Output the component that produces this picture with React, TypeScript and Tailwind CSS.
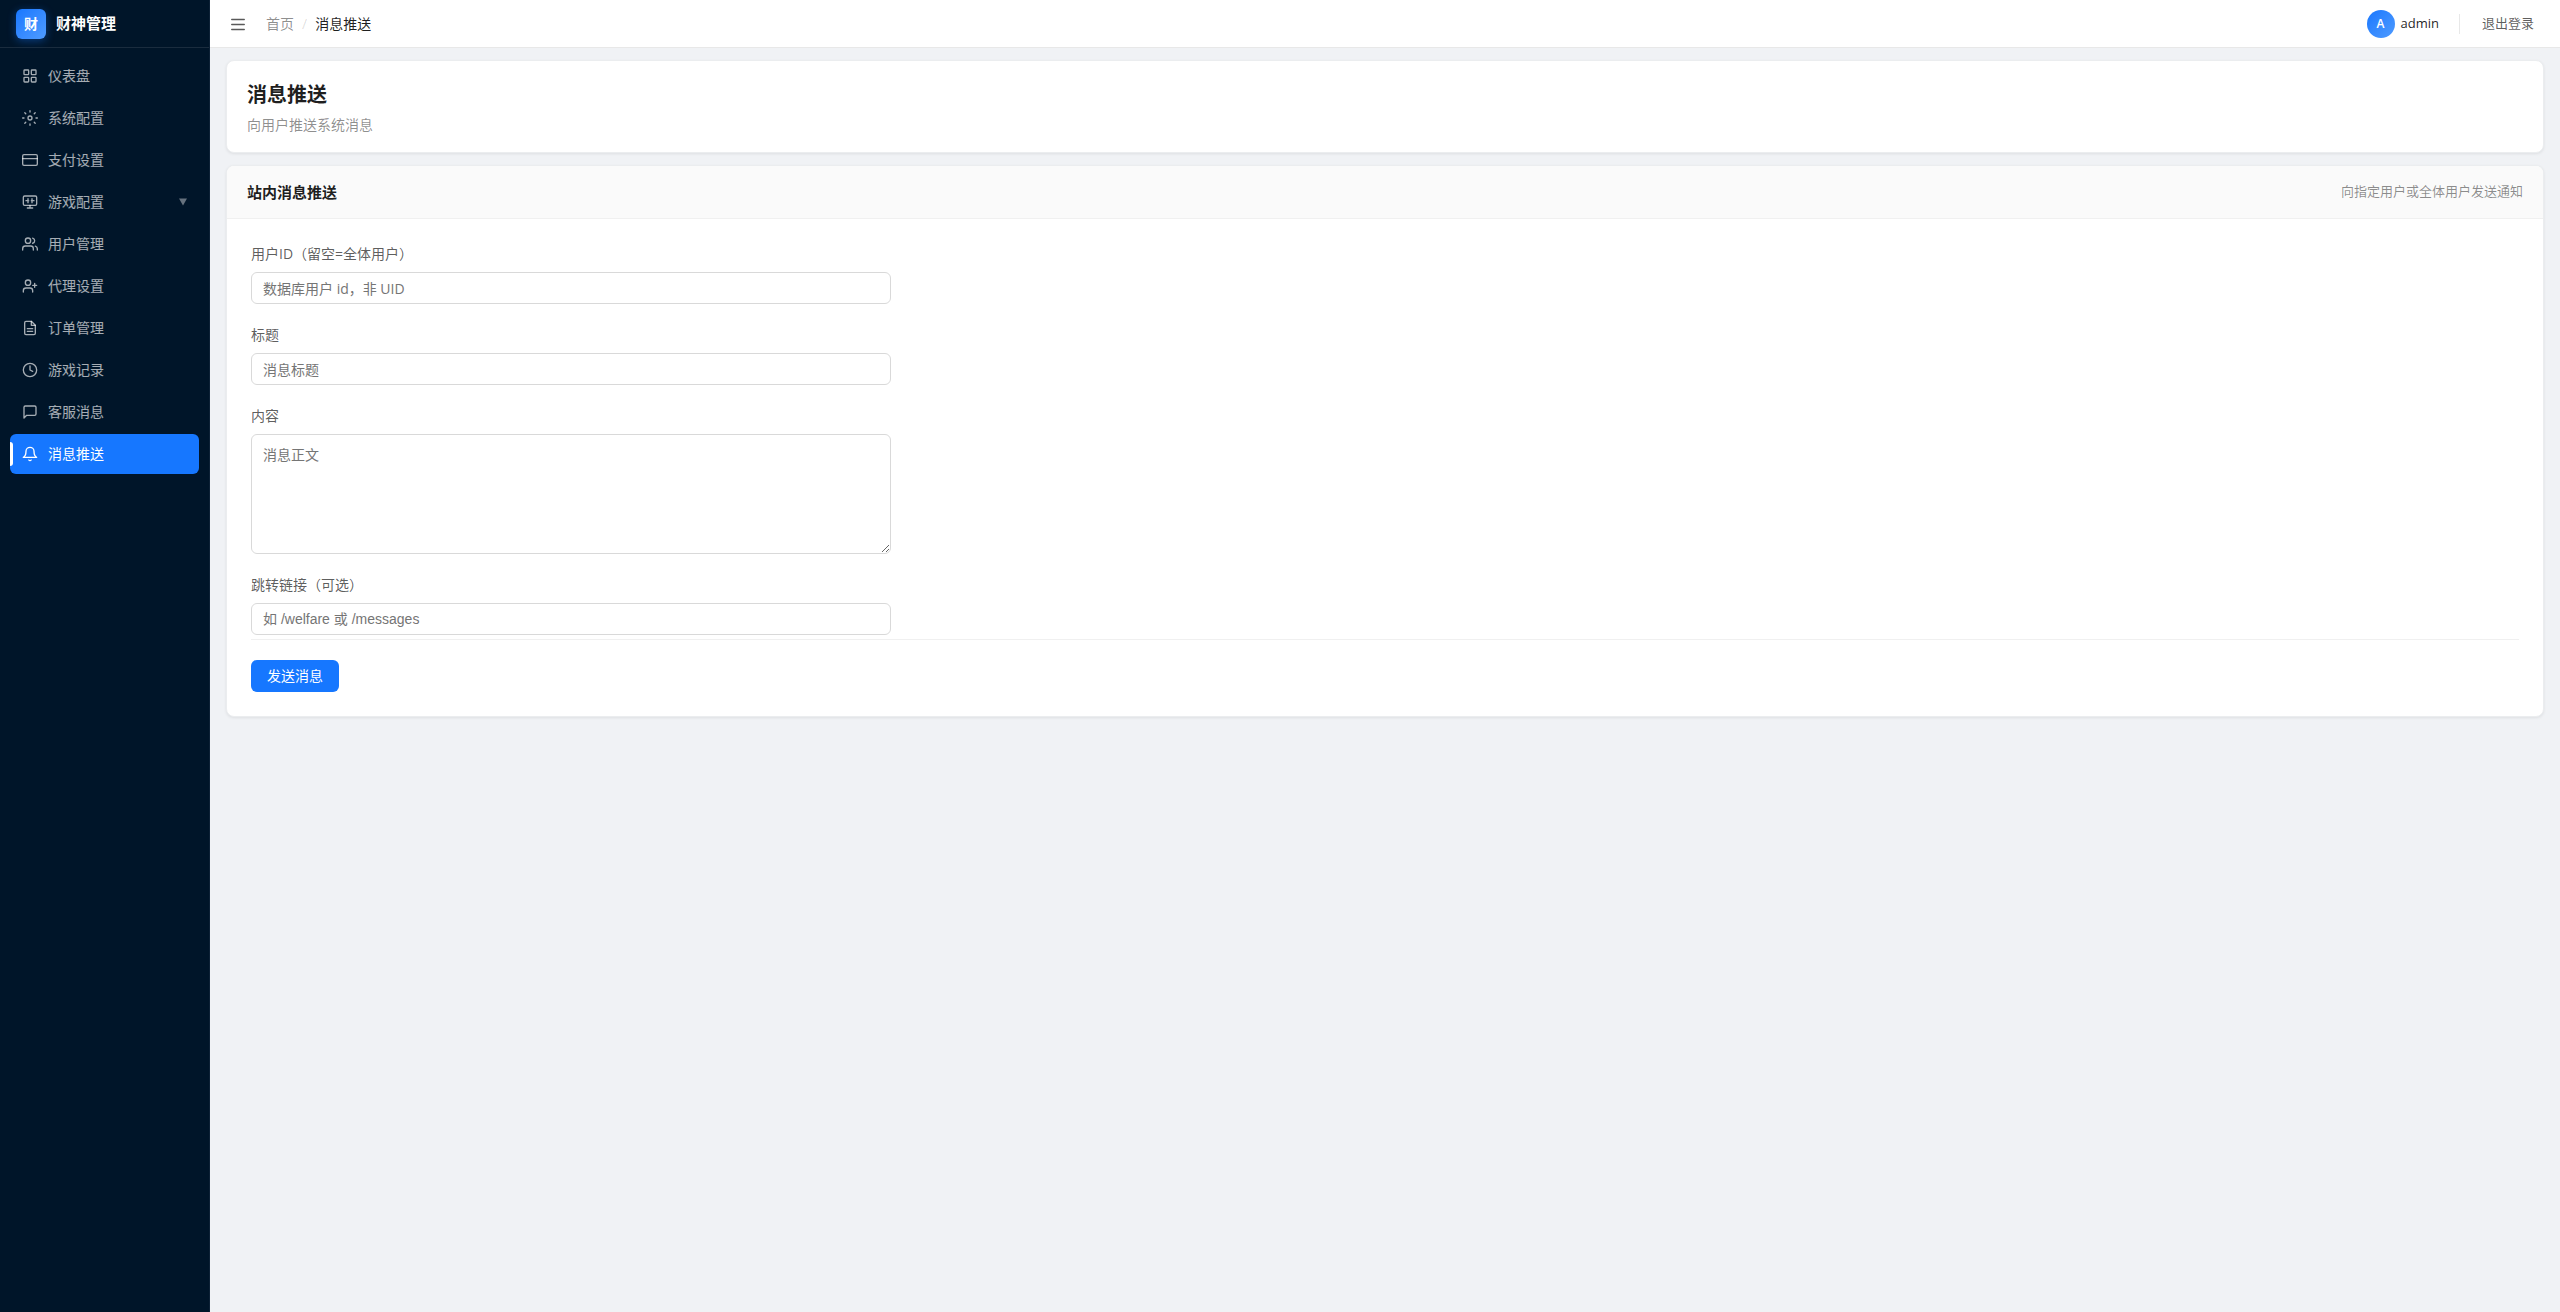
import React from 'react'

type NavItem = {
  label: string
  icon: React.ReactNode
  active?: boolean
  hasChildren?: boolean
}

const NAV_ITEMS: NavItem[] = [
  {
    label: '仪表盘',
    icon: (
      <>
        <rect x="3" y="3" width="7" height="7" rx="1" />
        <rect x="14" y="3" width="7" height="7" rx="1" />
        <rect x="3" y="14" width="7" height="7" rx="1" />
        <rect x="14" y="14" width="7" height="7" rx="1" />
      </>
    ),
  },
  {
    label: '系统配置',
    icon: (
      <>
        <circle cx="12" cy="12" r="3" />
        <path d="M12 1v2M12 21v2M4.22 4.22l1.42 1.42M18.36 18.36l1.42 1.42M1 12h2M21 12h2M4.22 19.78l1.42-1.42M18.36 5.64l1.42-1.42" />
      </>
    ),
  },
  {
    label: '支付设置',
    icon: (
      <>
        <rect x="1" y="4" width="22" height="16" rx="2" />
        <path d="M1 10h22" />
      </>
    ),
  },
  {
    label: '游戏配置',
    hasChildren: true,
    icon: (
      <>
        <rect x="2" y="3" width="20" height="14" rx="2" />
        <path d="M8 21h8M12 17v4M6 10h4M9 7v6M14 10h4M15 7v6" />
      </>
    ),
  },
  {
    label: '用户管理',
    icon: (
      <>
        <path d="M17 21v-2a4 4 0 0 0-4-4H5a4 4 0 0 0-4 4v2" />
        <circle cx="9" cy="7" r="4" />
        <path d="M23 21v-2a4 4 0 0 0-3-3.87M16 3.13a4 4 0 0 1 0 7.75" />
      </>
    ),
  },
  {
    label: '代理设置',
    icon: (
      <>
        <path d="M16 21v-2a4 4 0 0 0-4-4H6a4 4 0 0 0-4 4v2" />
        <circle cx="9" cy="7" r="4" />
        <path d="M19 8v6M22 11h-6" />
      </>
    ),
  },
  {
    label: '订单管理',
    icon: (
      <>
        <path d="M14 2H6a2 2 0 0 0-2 2v16a2 2 0 0 0 2 2h12a2 2 0 0 0 2-2V8z" />
        <path d="M14 2v6h6M16 13H8M16 17H8" />
      </>
    ),
  },
  {
    label: '游戏记录',
    icon: (
      <>
        <circle cx="12" cy="12" r="10" />
        <path d="M12 6v6l4 2" />
      </>
    ),
  },
  {
    label: '客服消息',
    icon: <path d="M21 15a2 2 0 0 1-2 2H7l-4 4V5a2 2 0 0 1 2-2h14a2 2 0 0 1 2 2z" />,
  },
  {
    label: '消息推送',
    active: true,
    icon: (
      <>
        <path d="M18 8A6 6 0 0 0 6 8c0 7-4 9-4 9h20s-4-2-4-9" />
        <path d="M13.73 21a2 2 0 0 1-3.46 0" />
      </>
    ),
  },
]

const LABEL = 'mb-2 block text-sm/[21px] text-black/65'

const FIELD =
  'block w-full rounded-md border border-[#d9d9d9] bg-white px-[11px] text-sm text-black/88 placeholder:text-[#757575] outline-none focus:border-[#1677ff]'

function NavIcon({ children }: { children: React.ReactNode }) {
  return (
    <svg
      viewBox="0 0 24 24"
      className="size-4 shrink-0"
      fill="none"
      stroke="currentColor"
      strokeWidth="2"
      strokeLinecap="round"
      strokeLinejoin="round"
      aria-hidden="true"
    >
      {children}
    </svg>
  )
}

function Sidebar() {
  return (
    <aside className="w-[210px] shrink-0 border-r border-[#0d2136] bg-[#001529]">
      <div className="flex h-12 items-center gap-2.5 border-b border-white/10 px-4">
        <span className="flex size-[30px] items-center justify-center rounded-md bg-linear-to-br from-[#1677ff] to-[#4e9bff] text-sm font-bold text-white shadow-[0_2px_8px_rgba(22,119,255,0.4)]">
          财
        </span>
        <span className="text-[15px] font-bold text-white">财神管理</span>
      </div>
      <nav className="flex flex-col gap-0.5 px-2.5 py-2">
        {NAV_ITEMS.map((item) => (
          <a
            key={item.label}
            href="#"
            aria-current={item.active ? 'page' : undefined}
            className={
              item.active
                ? 'relative flex h-10 items-center gap-2.5 rounded-md bg-[#1677ff] px-3 text-sm text-white'
                : 'flex h-10 items-center gap-2.5 rounded-md px-3 text-sm text-white/65 hover:text-white'
            }
          >
            {item.active && <span className="absolute left-0 top-2 h-6 w-[3px] rounded-r-sm bg-white" />}
            <NavIcon>{item.icon}</NavIcon>
            <span className="flex-1">{item.label}</span>
            {item.hasChildren && (
              <svg viewBox="0 0 8 8" className="size-2 text-white/40" fill="currentColor" aria-hidden="true">
                <path d="M0 0.5h8L4 7.5z" />
              </svg>
            )}
          </a>
        ))}
      </nav>
    </aside>
  )
}

function TopBar() {
  return (
    <header className="flex h-12 items-center justify-between border-b border-[#e8e8e8] bg-white px-4">
      <div className="flex items-center gap-4">
        <button type="button" aria-label="菜单" className="flex size-6 items-center justify-center text-black/65">
          <svg viewBox="0 0 16 16" className="size-4" fill="none" stroke="currentColor" strokeWidth="1.3" strokeLinecap="round">
            <path d="M1.7 3.5h12.6M1.7 8.5h12.6M1.7 13.5h12.6" />
          </svg>
        </button>
        <nav className="flex items-center gap-2 text-sm" aria-label="breadcrumb">
          <a href="#" className="text-black/45">
            首页
          </a>
          <span className="text-black/15">/</span>
          <span className="text-black/88">消息推送</span>
        </nav>
      </div>
      <div className="flex items-center text-[13px]">
        <span className="flex size-7 items-center justify-center rounded-full bg-linear-to-br from-[#1677ff] to-[#4e9bff] text-xs font-semibold text-white">
          A
        </span>
        <span className="ml-1.5 text-black/88">admin</span>
        <span className="ml-5 mr-3 h-5 w-px bg-[#e8e8e8]" />
        <button type="button" className="h-7 px-2.5 text-black/65 hover:text-[#1677ff]">
          退出登录
        </button>
      </div>
    </header>
  )
}

function PushForm() {
  return (
    <form className="p-6" onSubmit={(e) => e.preventDefault()}>
      <div className="flex max-w-[640px] flex-col gap-5">
        <div>
          <label htmlFor="user-id" className={LABEL}>
            用户ID（留空=全体用户）
          </label>
          <input id="user-id" type="text" placeholder="数据库用户 id，非 UID" className={`${FIELD} h-8`} />
        </div>
        <div>
          <label htmlFor="title" className={LABEL}>
            标题
          </label>
          <input id="title" type="text" placeholder="消息标题" className={`${FIELD} h-8`} />
        </div>
        <div>
          <label htmlFor="content" className={LABEL}>
            内容
          </label>
          <textarea id="content" placeholder="消息正文" className={`${FIELD} h-[120px] resize-y py-2.5`} />
        </div>
        <div>
          <label htmlFor="link" className={LABEL}>
            跳转链接（可选）
          </label>
          <input
            id="link"
            type="text"
            placeholder="如 /welfare 或 /messages"
            className={`${FIELD} h-8 font-['Liberation_Sans','Noto_Sans_CJK_SC',sans-serif]`}
          />
        </div>
      </div>
      <div className="mt-1 border-t border-[#f0f0f0] pt-5">
        <button type="submit" className="block h-8 rounded-md bg-[#1677ff] px-4 text-sm text-white hover:bg-[#4096ff]">
          发送消息
        </button>
      </div>
    </form>
  )
}

export default function App() {
  return (
    <div className="flex min-h-screen bg-[#f0f2f5] font-['Open_Sans','Noto_Sans_CJK_SC',sans-serif]">
      <Sidebar />
      <div className="min-w-0 flex-1">
        <TopBar />
        <main className="flex flex-col gap-3 px-4 py-3">
          <section className="rounded-lg border border-[#ebedef] bg-white px-5 py-4 shadow-[0_1px_3px_rgba(0,0,0,0.08)]">
            <h1 className="text-xl/9 font-bold text-black/88">消息推送</h1>
            <p className="mt-px text-sm/[22px] text-black/45">向用户推送系统消息</p>
          </section>
          <section className="overflow-hidden rounded-lg border border-[#ebedef] bg-white shadow-[0_1px_3px_rgba(0,0,0,0.08)]">
            <div className="flex h-[53px] items-center justify-between border-b border-[#f0f0f0] bg-[#fafafa] px-5">
              <h2 className="text-[15px] font-bold text-black/88">站内消息推送</h2>
              <span className="text-[13px] text-black/45">向指定用户或全体用户发送通知</span>
            </div>
            <PushForm />
          </section>
        </main>
      </div>
    </div>
  )
}
